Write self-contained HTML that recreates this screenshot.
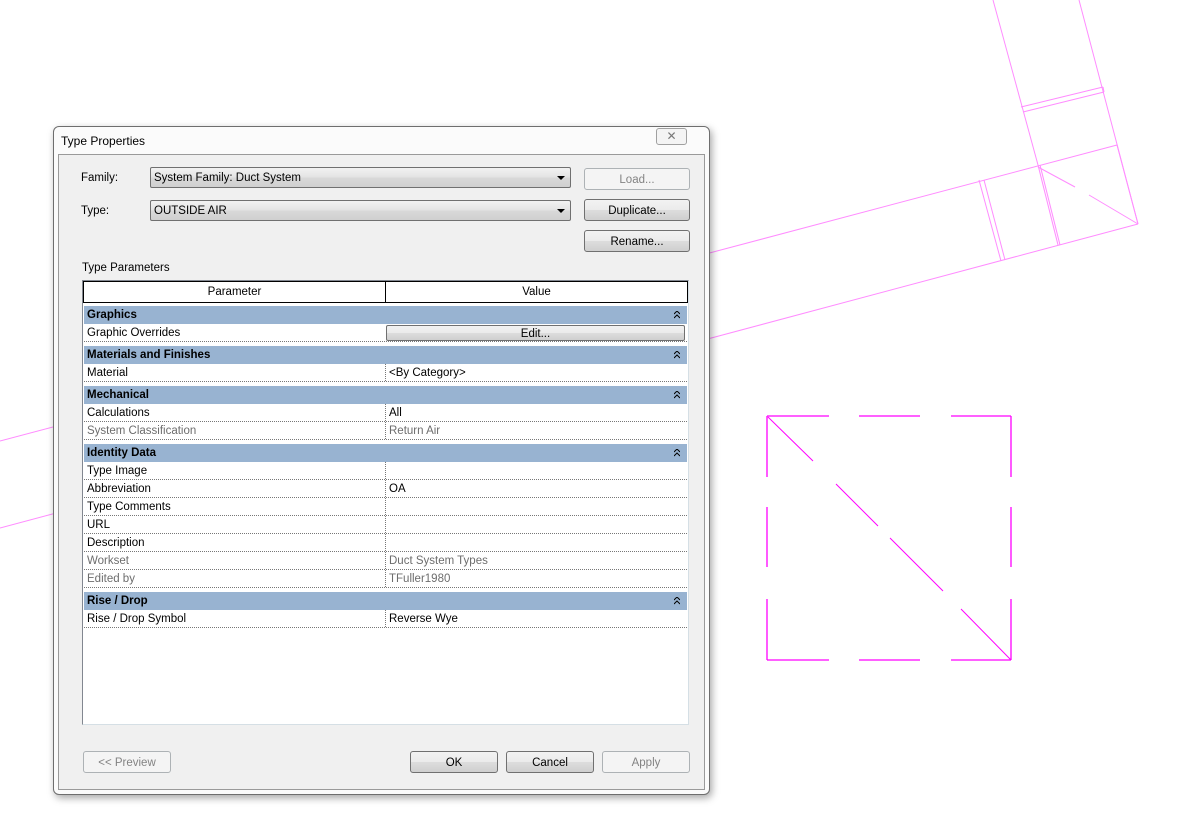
<!DOCTYPE html>
<html><head><meta charset="utf-8"><style>
*{margin:0;padding:0;box-sizing:border-box}
body{width:1196px;height:836px;background:#fff;position:relative;overflow:hidden;font-family:"Liberation Sans",sans-serif;font-size:11.5px;color:#000}
.a{position:absolute}
.dlg{left:53px;top:126px;width:657px;height:669px;border:1px solid #6e6e6e;border-radius:6px;background:#fbfbfb;box-shadow:2px 3px 8px rgba(0,0,0,.35)}
.inner{left:4px;top:27px;width:647px;height:636px;border:1px solid #9a9a9a;background:#f0f0f0}
.btn{position:absolute;height:22px;border:1px solid #707070;border-radius:3px;background:linear-gradient(#f2f2f2,#ebebeb 50%,#dddddd 51%,#cfcfcf);text-align:center;line-height:22px}
.btn.dis{border-color:#adb2b5;background:#f4f4f4;color:#838383}
.combo{position:absolute;height:21px;border:1px solid #707070;border-radius:2px;background:linear-gradient(#f2f2f2,#e3e3e3 50%,#d9d9d9 51%,#d0d0d0);line-height:21px;padding-left:3px}
.combo:after{content:"";position:absolute;right:5px;top:8px;border-left:4px solid transparent;border-right:4px solid transparent;border-top:4px solid #000}
.grid{left:82px;top:280px;width:607px;height:445px;border:1px solid #828790;border-right-color:#d5dfe5;border-bottom-color:#d5dfe5;background:#fff}
.row{position:absolute;left:1px;width:603px;height:18px;line-height:19px;border-bottom:1px dotted #777}
.row span{position:absolute;left:3px}
.row b{position:absolute;left:301px;top:0;height:17px;border-left:1px dotted #777;padding-left:3px;font-weight:normal}
.g{position:absolute;left:1px;width:603px;height:18px;line-height:19px;background:#98b3d1;font-weight:bold;padding-left:3px}
.g svg{position:absolute;right:7px;top:5px}
.gray{color:#6d6d6d}
</style></head><body>
<svg class="a" style="left:0;top:0" width="1196" height="836">
<g stroke="#ff8cff" stroke-width="1" fill="none">
<line x1="0" y1="441" x2="1117" y2="145"/>
<line x1="0" y1="528" x2="1138" y2="224"/>
<line x1="993" y1="0" x2="1038" y2="165"/>
<line x1="1079" y1="0" x2="1138" y2="224"/>
<line x1="1021" y1="107" x2="1103" y2="87"/>
<line x1="1023" y1="112" x2="1104" y2="92"/>
<line x1="1103" y1="87" x2="1104" y2="92"/>
<line x1="979" y1="180" x2="1001" y2="261"/>
<line x1="984" y1="180" x2="1005" y2="260"/>
<line x1="1038" y1="165" x2="1058" y2="245"/>
<line x1="1040" y1="165" x2="1060" y2="245"/>
<line x1="1117" y1="145" x2="1138" y2="224"/>
<line x1="1038" y1="167" x2="1075" y2="187"/>
<line x1="1089" y1="195" x2="1138" y2="224"/>
</g>
<g stroke="#ff00ff" stroke-width="1.3" fill="none">
<path d="M767 416H829M859 416H920M951 416H1011M767 660H829M859 660H920M951 660H1011M767 416V477M767 507V567M767 599V660M1011 416V477M1011 507V567M1011 599V660"/>
<path d="M768 417L813 461M836 484L878 526M890 538L943 591M961 609L1011 660" stroke-width="1"/>
</g>
</svg>
<div class="a dlg">
<div class="a" style="left:7px;top:7px;font-size:12px">Type Properties</div>
<div class="a" style="left:602px;top:1px;width:31px;height:17px;border:1px solid #a0a0a0;border-radius:3px;background:#f4f4f4;text-align:center;color:#777;font-size:12px;line-height:15px">✕</div>
<div class="a inner"></div>
</div>
<div class="a" style="left:81px;top:172px">Family:</div>
<div class="a" style="left:81px;top:205px">Type:</div>
<div class="combo" style="left:150px;top:167px;width:421px">System Family: Duct System</div>
<div class="combo" style="left:150px;top:200px;width:421px">OUTSIDE AIR</div>
<div class="btn dis" style="left:584px;top:168px;width:106px">Load...</div>
<div class="btn" style="left:584px;top:199px;width:106px">Duplicate...</div>
<div class="btn" style="left:584px;top:230px;width:106px">Rename...</div>
<div class="a" style="left:82px;top:262px">Type Parameters</div>
<div class="a grid">
<div class="a" style="left:0;top:0;width:605px;height:22px;border:1px solid #000;background:#fff">
<div class="a" style="left:0;width:301px;text-align:center;line-height:21px">Parameter</div>
<div class="a" style="left:301px;top:0;height:20px;border-left:1px solid #000;width:302px;text-align:center;line-height:21px">Value</div>
</div>
<div class="g" style="top:25px">Graphics<svg width="6" height="8"><path d="M0 3L3 0L6 3M0 7L3 4L6 7" stroke="#000" fill="none"/></svg></div>
<div class="row" style="top:43px"><span>Graphic Overrides</span></div>
<div class="btn" style="left:303px;top:44px;width:299px;height:16px;line-height:16px;border-radius:2px">Edit...</div>
<div class="g" style="top:65px">Materials and Finishes<svg width="6" height="8"><path d="M0 3L3 0L6 3M0 7L3 4L6 7" stroke="#000" fill="none"/></svg></div>
<div class="row" style="top:83px"><span>Material</span><b>&lt;By Category&gt;</b></div>
<div class="g" style="top:105px">Mechanical<svg width="6" height="8"><path d="M0 3L3 0L6 3M0 7L3 4L6 7" stroke="#000" fill="none"/></svg></div>
<div class="row" style="top:123px"><span>Calculations</span><b>All</b></div>
<div class="row gray" style="top:141px"><span>System Classification</span><b>Return Air</b></div>
<div class="g" style="top:163px">Identity Data<svg width="6" height="8"><path d="M0 3L3 0L6 3M0 7L3 4L6 7" stroke="#000" fill="none"/></svg></div>
<div class="row" style="top:181px"><span>Type Image</span><b></b></div>
<div class="row" style="top:199px"><span>Abbreviation</span><b>OA</b></div>
<div class="row" style="top:217px"><span>Type Comments</span><b></b></div>
<div class="row" style="top:235px"><span>URL</span><b></b></div>
<div class="row" style="top:253px"><span>Description</span><b></b></div>
<div class="row gray" style="top:271px"><span>Workset</span><b>Duct System Types</b></div>
<div class="row gray" style="top:289px"><span>Edited by</span><b>TFuller1980</b></div>
<div class="g" style="top:311px">Rise / Drop<svg width="6" height="8"><path d="M0 3L3 0L6 3M0 7L3 4L6 7" stroke="#000" fill="none"/></svg></div>
<div class="row" style="top:329px"><span>Rise / Drop Symbol</span><b>Reverse Wye</b></div>
</div>
<div class="btn dis" style="left:83px;top:751px;width:88px">&lt;&lt; Preview</div>
<div class="btn" style="left:410px;top:751px;width:88px">OK</div>
<div class="btn" style="left:506px;top:751px;width:88px">Cancel</div>
<div class="btn dis" style="left:602px;top:751px;width:88px">Apply</div>
</body></html>
